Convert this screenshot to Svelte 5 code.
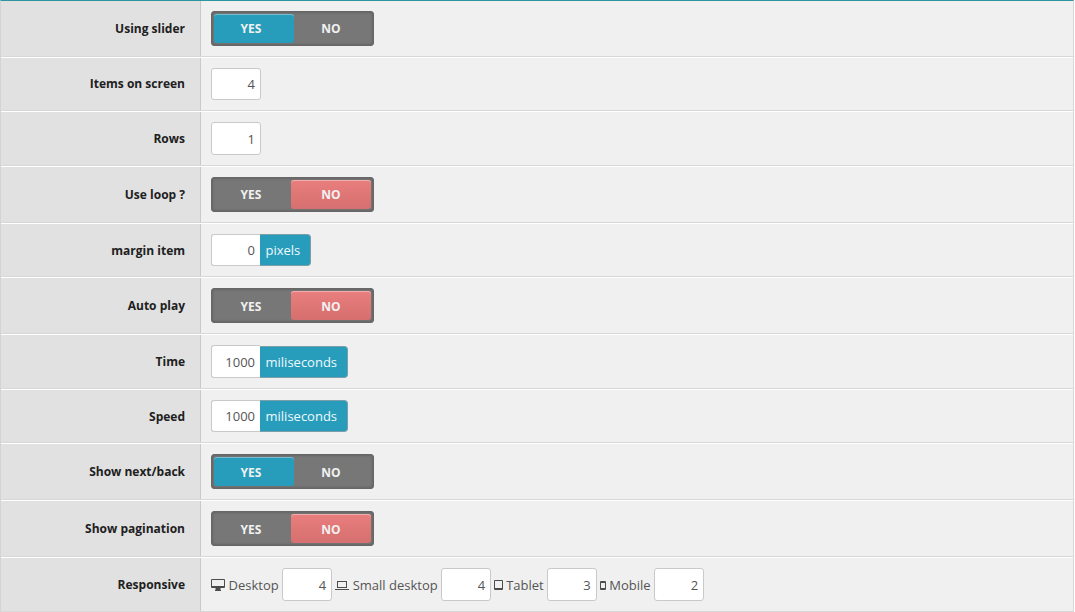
<script>
  const rows = [
    { label: 'Using slider', kind: 'switch', on: true, h: 56, lp: 19, tp: 6 },
    { label: 'Items on screen', kind: 'number', value: 4, h: 54, ih: 32, lp: 17 },
    { label: 'Rows', kind: 'number', value: 1, h: 55, ih: 33, lp: 18 },
    { label: 'Use loop ?', kind: 'switch', on: false, h: 57, lp: 19, tp: 6 },
    { label: 'margin item', kind: 'number', value: 0, unit: 'pixels', h: 54, ih: 32, lp: 18 },
    { label: 'Auto play', kind: 'switch', on: false, h: 57, lp: 19, tp: 7 },
    { label: 'Time', kind: 'number', value: 1000, unit: 'miliseconds', h: 55, ih: 33, lp: 18 },
    { label: 'Speed', kind: 'number', value: 1000, unit: 'miliseconds', h: 54, ih: 32, lp: 18 },
    { label: 'Show next/back', kind: 'switch', on: true, h: 57, lp: 19, tp: 7 },
    { label: 'Show pagination', kind: 'switch', on: false, h: 57, lp: 19, tp: 7 },
    { label: 'Responsive', kind: 'devices', h: 55, ih: 33, lp: 18 }
  ];
  const devices = [
    { name: 'Desktop', value: 4, w: 14 },
    { name: 'Small desktop', value: 4, w: 14 },
    { name: 'Tablet', value: 3, w: 9 },
    { name: 'Mobile', value: 2, w: 6 }
  ];
</script>

<div class="form">
  {#each rows as row}
    <div class="row" style:height="{row.h}px">
      <div class="label" style:padding-top="{row.lp}px">{row.label}</div>
      <div class="field">
        {#if row.kind === 'switch'}
          <div class="switch" style:line-height="{row.tp * 2 + 17}px">
            <span class:yes={row.on}>YES</span>
            <span class:no={!row.on}>NO</span>
          </div>
        {:else if row.kind === 'number'}
          <div class="group">
            <div class="input" class:joined={row.unit} style:height="{row.ih}px" style:padding-top="{row.ih - 26}px">{row.value}</div>
            {#if row.unit}<div class="unit">{row.unit}</div>{/if}
          </div>
        {:else}
          {#each devices as d}
            <div class="device">
              <svg width={d.w} height="14" viewBox="0 0 {d.w} 14">
                {#if d.name === 'Desktop'}
                  <path fill-rule="evenodd" d="M1 1h12q1 0 1 1v7q0 1-1 1H9.500v2h.5v1H4v-1h.500v-2H1Q0 10 0 9V2q0-1 1-1zM1 2v6h12V2z" />
                {:else if d.name === 'Small desktop'}
                  <path fill-rule="evenodd" d="M2 3h10v7H2zM3 4v5h8V4zM0 11h14v1H0z" />
                {:else if d.name === 'Tablet'}
                  <path fill-rule="evenodd" d="M1 2h7q1 0 1 1v8q0 1-1 1H1q-1 0-1-1V3q0-1 1-1zM1 3v7h7V3z" />
                {:else}
                  <path fill-rule="evenodd" d="M1 3h4q1 0 1 1v7q0 1-1 1H1q-1 0-1-1V4q0-1 1-1zM1 5v5h4V5z" />
                {/if}
              </svg>
              <span>{d.name}</span>
              <div class="input" style:height="{row.ih}px">{d.value}</div>
            </div>
          {/each}
        {/if}
      </div>
    </div>
  {/each}
</div>

<style>
  :global(body) {
    background: #fff;
    overflow: hidden;
  }
  .form {
    box-sizing: border-box;
    width: 1074px;
    height: 612px;
    border-top: 1px solid #2e949f;
    border-left: 1px solid #d4d4d4;
    border-right: 1px solid #d8d8d8;
    font: 13px/18px 'Open Sans', sans-serif;
    color: #555;
  }
  .row {
    box-sizing: border-box;
    display: flex;
    border-top: 1px solid #fff;
    border-bottom: 1px solid #d8d8d8;
    background: #f0f0f0;
  }
  .row:first-child {
    border-top: 0;
  }
  .label {
    box-sizing: border-box;
    width: 200px;
    padding-right: 15px;
    border-right: 1px solid #c9c9c9;
    background: #e1e1e1;
    color: #202020;
    font-size: 12px;
    font-weight: 700;
    text-align: right;
  }
  .field {
    display: flex;
    align-items: flex-start;
    padding: 10px 0 0 10px;
  }
  .switch {
    box-sizing: border-box;
    display: flex;
    width: 163px;
    height: 35px;
    padding: 2px;
    border: 1px solid #676767;
    border-radius: 3px;
    background: #777;
    box-shadow: inset 0 0 3px rgba(0, 0, 0, 0.3);
    color: #f1f1f1;
    font-size: 12px;
    font-weight: 700;
  }
  .switch span {
    box-sizing: border-box;
    width: 77px;
    height: 29px;
    padding-right: 3px;
    border-radius: 3px;
    text-align: center;
  }
  .switch .yes {
    width: 80px;
    padding-right: 6px;
    background: #279cbb;
    box-shadow: inset 0 1px #75bdcf;
  }
  .switch .no {
    width: 80px;
    padding-right: 0;
    background: linear-gradient(#e97e7e, #d66f6f);
    box-shadow: inset 0 1px #f1acac;
  }
  .group {
    display: flex;
    align-items: flex-end;
  }
  .input {
    box-sizing: border-box;
    width: 50px;
    padding: 7px 5px 0 0;
    border: 1px solid #c9c9c9;
    border-radius: 3px;
    background: #fff;
    text-align: right;
  }
  .joined {
    width: 49px;
    border-right: 0;
    border-radius: 3px 0 0 3px;
  }
  .unit {
    box-sizing: border-box;
    height: 32px;
    padding: 6px 9.5px 0 5.5px;
    border: 1px solid #7b9fa9;
    border-left: 0;
    border-radius: 0 4px 4px 0;
    background: #279cbb;
    color: #eefafd;
  }
  .device {
    display: flex;
    margin-right: 3px;
  }
  .device svg {
    margin-top: 10px;
    margin-right: 3.5px;
    fill: #4c4c4c;
  }
  .device span {
    margin: 8px 3.5px 0 0;
  }
  .device:nth-child(3) svg {
    margin-right: 3px;
  }
  .device:nth-child(3) span {
    margin-right: 3px;
  }
</style>
